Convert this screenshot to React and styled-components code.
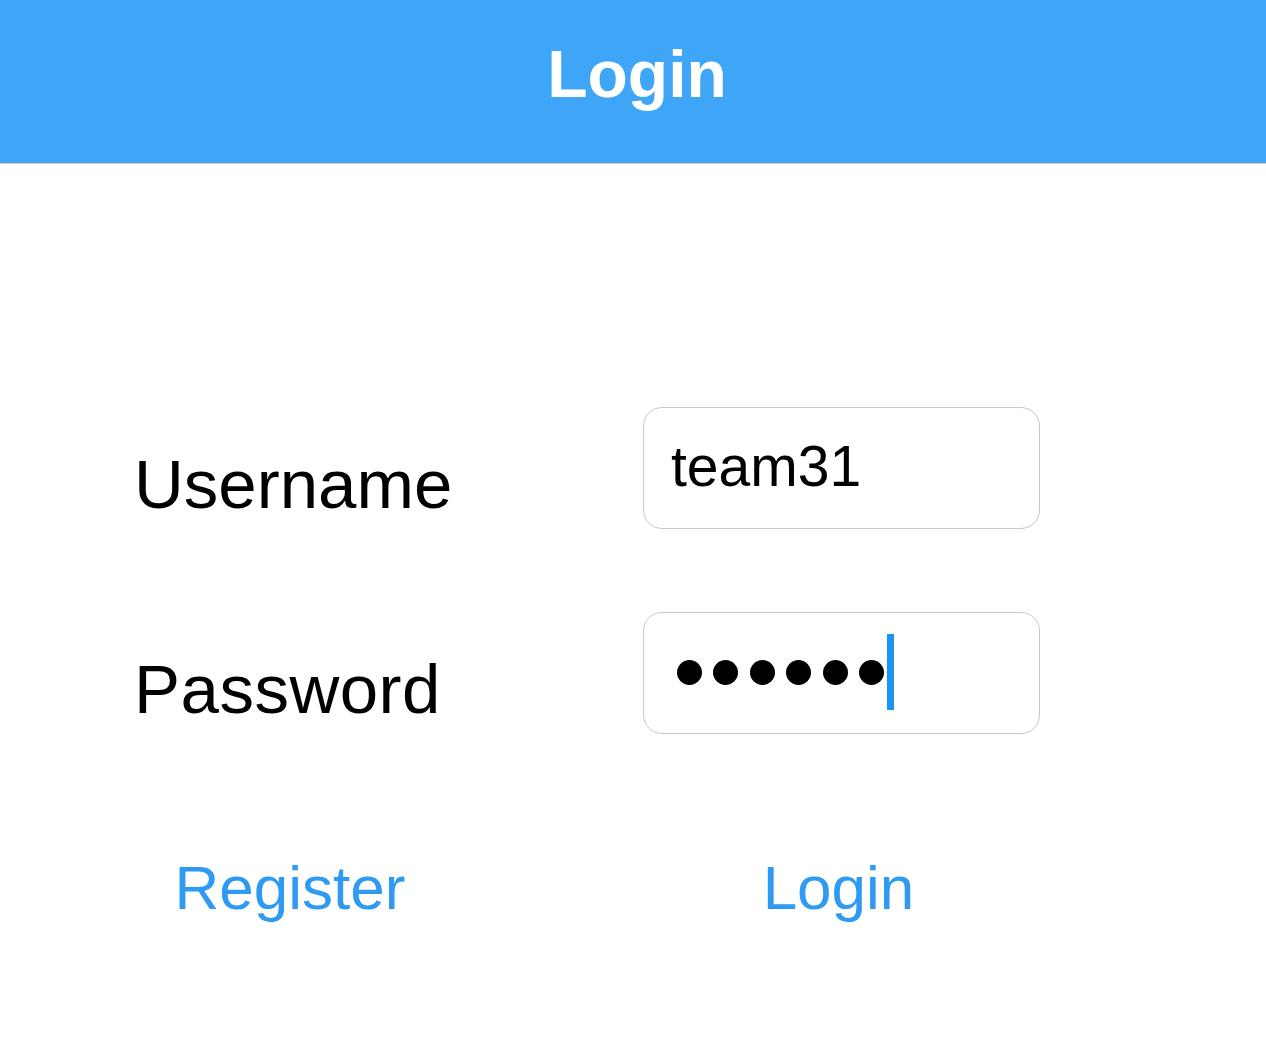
import React from "react";
import styled, { createGlobalStyle } from "styled-components";

const Global = createGlobalStyle`
  html, body { margin: 0; padding: 0; background: #ffffff; }
  body { font-family: "Liberation Sans", Arial, Helvetica, sans-serif; }
`;

const Page = styled.div`
  width: 1266px;
  min-height: 1040px;
  background: #fff;
`;

const NavBar = styled.header`
  height: 163px;
  background: #3ea5f7;
  border-bottom: 1px solid #d3cdc3;
  box-sizing: content-box;
  display: flex;
  justify-content: center;
  align-items: flex-start;
  padding-left: 8px;
`;

const Title = styled.h1`
  margin: 41px 0 0;
  font-size: 66px;
  line-height: 66px;
  font-weight: 700;
  color: #ffffff;
`;

const Form = styled.div`
  display: flex;
  flex-direction: column;
  padding: 243px 0 0 134px;
`;

const Fields = styled.div`
  display: flex;
  flex-direction: column;
  gap: 83px;
`;

const Row = styled.div`
  display: flex;
  align-items: flex-start;
`;

const Label = styled.label`
  width: 509px;
  margin-top: 43px;
  font-size: 69px;
  line-height: 69px;
  color: #000;
  letter-spacing: ${(p) => p.$spacing || 0}px;
`;

const Field = styled.div`
  box-sizing: border-box;
  width: 397px;
  height: 122px;
  border: 1px solid #c9c9c9;
  border-radius: 19px;
  background: #fff;
  display: flex;
  align-items: ${(p) => (p.$center ? "center" : "flex-start")};
  padding: ${(p) => (p.$center ? "0 0 0 33px" : "30px 0 0 27px")};
`;

const FieldText = styled.span`
  font-size: 57px;
  line-height: 57px;
  color: #000;
`;

const Dots = styled.div`
  display: flex;
  align-items: center;
  gap: 11.4px;
  margin-top: -2px;
`;

const Dot = styled.span`
  width: 25px;
  height: 25px;
  border-radius: 50%;
  background: #000;
`;

const Caret = styled.span`
  width: 7px;
  height: 76px;
  background: #1f93f2;
  margin-left: -8px;
`;

const Actions = styled.div`
  display: grid;
  grid-template-columns: 312px 197px 397px;
  margin-top: 123px;
`;

const LinkButton = styled.button`
  grid-column: ${(p) => p.$col};
  background: none;
  border: none;
  padding: 0;
  font-family: inherit;
  font-size: 62px;
  line-height: 62px;
  color: #2e9af2;
  text-align: center;
  cursor: pointer;
  margin-left: ${(p) => p.$shift || 0}px;
`;

export default function App() {
  return (
    <Page>
      <Global />
      <NavBar>
        <Title>Login</Title>
      </NavBar>
      <Form>
        <Fields>
          <Row>
            <Label>Username</Label>
            <Field>
              <FieldText>team31</FieldText>
            </Field>
          </Row>
          <Row>
            <Label $spacing={0.5}>Password</Label>
            <Field $center>
              <Dots>
                {Array.from({ length: 6 }).map((_, i) => (
                  <Dot key={i} />
                ))}
                <Caret />
              </Dots>
            </Field>
          </Row>
        </Fields>
        <Actions>
          <LinkButton $col={1}>Register</LinkButton>
          <LinkButton $col={3} $shift={-6}>Login</LinkButton>
        </Actions>
      </Form>
    </Page>
  );
}
